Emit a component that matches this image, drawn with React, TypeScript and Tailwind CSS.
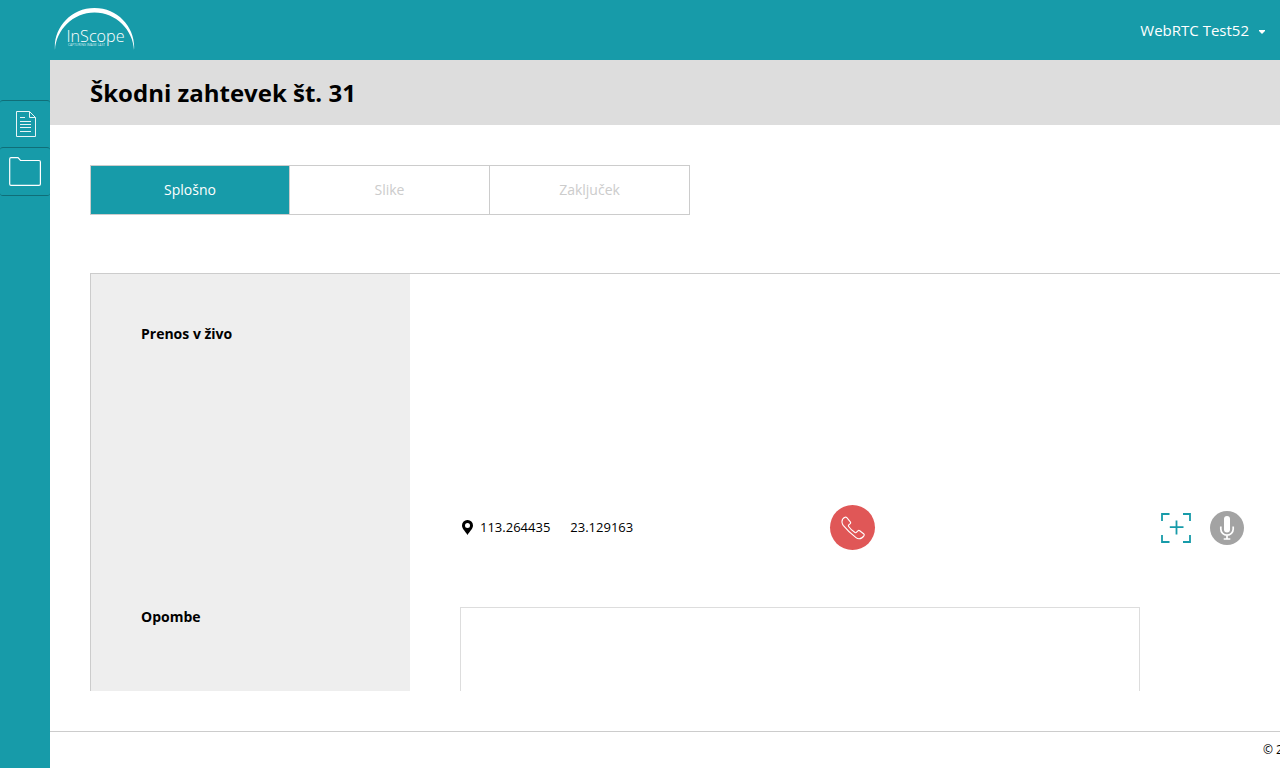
import React from "react";

function Logo() {
  return (
    <svg width="82" height="48" viewBox="0 0 82 48" fill="none">
      <path d="M1 45C-1 24 16 3 40.500 3S82 24 80 45C79 25 62 7.500 40.500 7.500S2 25 1 45Z" fill="#fff" />
      <text x="12.500" y="36.500" fontSize="16.500" fontWeight="300" fill="#fff" fontFamily="Open Sans" textLength="58" lengthAdjust="spacingAndGlyphs">InScope</text>
      <text x="14" y="41" fontSize="3.500" fill="#d5edf0" fontFamily="Open Sans" textLength="37" lengthAdjust="spacingAndGlyphs">CAPTURING IMAGE LAST</text>
    </svg>
  );
}

function DocumentIcon() {
  return (
    <svg width="20" height="26" viewBox="0 0 20 26" fill="none" stroke="#fff" strokeWidth="1" opacity=".9">
      <path d="M.5 .5H13.500L19.500 6.500V25.500H.5ZM13.500 .5V6.500H19.500M4 6.500H9M4 10.500H15M4 13.500H15M4 16.500H15M4 20.500H15" />
    </svg>
  );
}

function FolderIcon() {
  return (
    <svg width="32" height="29" viewBox="0 0 32 29" fill="none" stroke="#fff" strokeWidth="1.200">
      <path d="M.7 2Q.7 .7 2 .7H9L11.500 3.500H30Q31.400 3.500 31.400 5V27Q31.400 28.300 30 28.300H2Q.7 28.300 .7 27Z" />
    </svg>
  );
}

function PinIcon() {
  return (
    <svg width="11" height="15" viewBox="0 0 11 15">
      <path fillRule="evenodd" d="M5.500 0A5.400 5.400 0 0 0 0 5.400C0 9 3.800 11.500 5.500 15C7.200 11.500 11 9 11 5.400A5.400 5.400 0 0 0 5.500 0ZM5.500 3A2.500 2.500 0 1 1 5.500 8A2.500 2.500 0 0 1 5.500 3Z" />
    </svg>
  );
}

function PhoneIcon() {
  return (
    <svg width="24" height="24" viewBox="0 0 24 24" fill="none" stroke="#fff" strokeWidth="1.100" strokeLinejoin="round">
      <path d="M1 6.200C.8 3.500 2.500 1.800 4 1.200Q5 .8 5.800 1.700L9.300 5.800Q10 6.700 9.200 7.600L7.800 8.900Q7.100 9.700 7.700 10.500Q10 14 14 16.500Q14.900 17 15.600 16.200L16.900 14.800Q17.800 14 18.700 14.700L22.600 17.700Q23.600 18.500 23 19.600C21.800 21.600 20.500 22.900 18 22.800Q16.500 22.800 15 21.600C10.500 18 6 14 2.200 9.300Q1.200 8 1 6.200Z" />
    </svg>
  );
}

function CaptureIcon() {
  return (
    <svg width="30" height="30" viewBox="0 0 30 30" fill="none" stroke="#179ba9" strokeWidth="1.800">
      <path d="M1 8V1H8.500M22 1H29V8M29 22V29H22M8.500 29H1V22M15.500 7.500V21.500M8.800 14.200H22.500" />
    </svg>
  );
}

function MicIcon() {
  return (
    <svg width="34" height="34" viewBox="0 0 34 34" fill="none">
      <circle cx="17" cy="17" r="17" fill="#a3a3a3" />
      <rect x="14" y="5" width="6" height="16.500" rx="3" fill="#fff" />
      <path d="M10.800 15.500V18A6.200 6.200 0 0 0 23.200 18V15.500M17 24V28M13.700 28H20.300" stroke="#fff" strokeWidth="1.700" />
    </svg>
  );
}

export default function App() {
  return (
    <div className="flex h-[768px] w-[1280px] flex-col overflow-hidden bg-white font-['Open_Sans',sans-serif] text-black">
      <header className="flex h-[60px] shrink-0 justify-between bg-[#179ba9] pr-[15px] pl-[54px]">
        <div className="pt-[5px]"><Logo /></div>
        <button className="flex h-[60px] items-center gap-[10px] text-[15px] text-white">
          <span>WebRTC Test52</span>
          <svg className="mt-1" width="6" height="4" viewBox="0 0 6 4"><path d="M0 0H6V1L3 4L0 1Z" fill="#fff" /></svg>
        </button>
      </header>
      <div className="flex min-h-0 flex-1">
        <nav className="w-[50px] shrink-0 bg-[#179ba9] pt-10">
          <a className="flex h-[47px] items-center justify-center rounded-t-[3px] border-t border-[#106e78] pl-[2px]"><DocumentIcon /></a>
          <a className="flex h-[49px] items-center justify-center rounded-[3px] border-y border-[#106e78]"><FolderIcon /></a>
        </nav>
        <div className="flex min-w-0 flex-1 flex-col">
          <div className="flex h-[65px] shrink-0 items-center bg-[#ddd] pl-10">
            <h1 className="text-2xl font-bold">Škodni zahtevek št. 31</h1>
          </div>
          <main className="flex min-h-0 flex-1 flex-col pt-10 pb-10 pl-10">
            <div className="flex h-[50px] w-[600px] shrink-0 border border-[#ccc] text-sm text-[#ccc]">
              <button className="w-[199px] border-r border-[#ccc] bg-[#179ba9] text-white">Splošno</button>
              <button className="w-[200px] border-r border-[#ccc]">Slike</button>
              <button className="w-[199px]">Zaključek</button>
            </div>
            <section className="mt-[58px] flex min-h-0 flex-1 flex-col overflow-hidden border-t border-l border-[#ccc]">
              <div className="flex h-[283px] shrink-0">
                <div className="w-[319px] bg-[#eee] pt-[50px] pl-[50px] text-sm font-bold">Prenos v živo</div>
                <div className="flex flex-1 items-end pb-[7px] pl-[50px]">
                  <div className="flex h-[45px] w-full items-center text-[13px]">
                    <div className="flex w-[370px] items-center pl-[2px]">
                      <PinIcon /><span className="ml-[7px]">113.264435</span><span className="ml-5">23.129163</span>
                    </div>
                    <button className="flex size-[45px] items-center justify-center rounded-full bg-[#e05757]"><PhoneIcon /></button>
                    <div className="ml-auto flex items-center gap-[19px] pr-9"><CaptureIcon /><MicIcon /></div>
                  </div>
                </div>
              </div>
              <div className="flex min-h-0 flex-1">
                <div className="w-[319px] bg-[#eee] pt-[50px] pl-[50px] text-sm font-bold">Opombe</div>
                <div className="min-h-0 flex-1 overflow-hidden pt-[50px] pl-[50px]">
                  <textarea className="block h-[150px] w-[680px] resize-none border border-[#ddd] outline-none" />
                </div>
              </div>
            </section>
          </main>
          <footer className="flex h-[37px] shrink-0 items-center justify-end overflow-hidden border-t border-[#ccc] text-xs">
            <span className="w-[17px] overflow-hidden whitespace-nowrap">© 2017</span>
          </footer>
        </div>
      </div>
    </div>
  );
}
